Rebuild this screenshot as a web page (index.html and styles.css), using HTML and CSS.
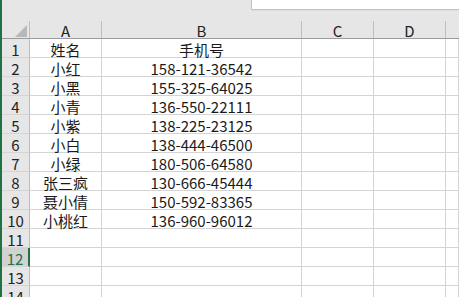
FILE: index.html
```html
<html>
  <head>
    <link rel="stylesheet" href="styles.css">
    <title>Sheet1</title>
  </head>
  <body>
    <div class="topbar">
      <div class="formula"></div>
    </div>
    <div class="sheet" id="sheet">
      <div class="head corner"></div>
      <div class="head col">A</div>
      <div class="head col">B</div>
      <div class="head col">C</div>
      <div class="head col">D</div>
      <div class="head col last"></div>
    </div>
    <script>
      const sheet = document.querySelector('#sheet');
      const rows = [
        ['姓名', '手机号'],
        ['小红', '158-121-36542'],
        ['小黑', '155-325-64025'],
        ['小青', '136-550-22111'],
        ['小紫', '138-225-23125'],
        ['小白', '138-444-46500'],
        ['小绿', '180-506-64580'],
        ['张三疯', '130-666-45444'],
        ['聂小倩', '150-592-83365'],
        ['小桃红', '136-960-96012'],
        ['', ''], ['', ''], ['', ''], ['', '']
      ];

      rows.forEach((r, i) => {
        const num = document.createElement('div');
        num.className = 'head rownum';
        if (i + 1 === 12) num.classList.add('active');
        num.innerText = i + 1;
        sheet.appendChild(num);
        [r[0], r[1], '', '', ''].forEach((text) => {
          const cell = document.createElement('div');
          cell.className = 'cell';
          cell.innerText = text;
          sheet.appendChild(cell);
        });
      });
    </script>
  </body>
</html>
```

FILE: styles.css
```css
body {
  margin: 0;
  background: #e6e6e6;
  border-left: 2px solid #217346;
  height: 297px;
  overflow: hidden;
  font-family: "Noto Sans CJK SC", "Noto Sans", sans-serif;
  font-size: 15px;
  line-height: 1;
  color: #1a1a1a;
}

.topbar {
  height: 21px;
}

.formula {
  margin-left: 249px;
  height: 10px;
  box-sizing: border-box;
  background: #fff;
  border-left: 1px solid #c4c4c4;
  border-bottom: 1px solid #c4c4c4;
  box-shadow: 1px 1px 0 #dcdcdc;
}

.sheet {
  display: grid;
  grid-template-columns: 28px 72px 200px 72px 72px 1fr;
  grid-auto-rows: 19px;
  grid-template-rows: 18px;
  background: #fff;
}

.head {
  background: #e6e6e6;
  display: flex;
  align-items: center;
  justify-content: center;
  box-sizing: border-box;
  color: #222;
}

.col {
  border-right: 1px solid #bdbdbd;
  border-bottom: 1px solid #9b9b9b;
  padding-top: 2px;
}

.col.last {
  border-right: none;
}

.corner {
  border-right: 1px solid #bdbdbd;
  border-bottom: 1px solid #9b9b9b;
  justify-content: flex-end;
  align-items: flex-end;
  padding: 0 2px 1px 0;
}

.corner::after {
  content: '';
  width: 12px;
  height: 12px;
  background: #b8b8b8;
  clip-path: polygon(100% 0, 100% 100%, 0 100%);
}

.rownum {
  border-right: 1px solid #bdbdbd;
  border-bottom: 1px solid #d4d4d4;
  padding-top: 2px;
}

.rownum.active {
  background: #d2d2d2;
  color: #217346;
  border-right: 2px solid #217346;
}

.cell {
  box-sizing: border-box;
  border-right: 1px solid #d4d4d4;
  border-bottom: 1px solid #d4d4d4;
  display: flex;
  align-items: center;
  justify-content: center;
  padding-top: 2px;
  white-space: nowrap;
}
```
